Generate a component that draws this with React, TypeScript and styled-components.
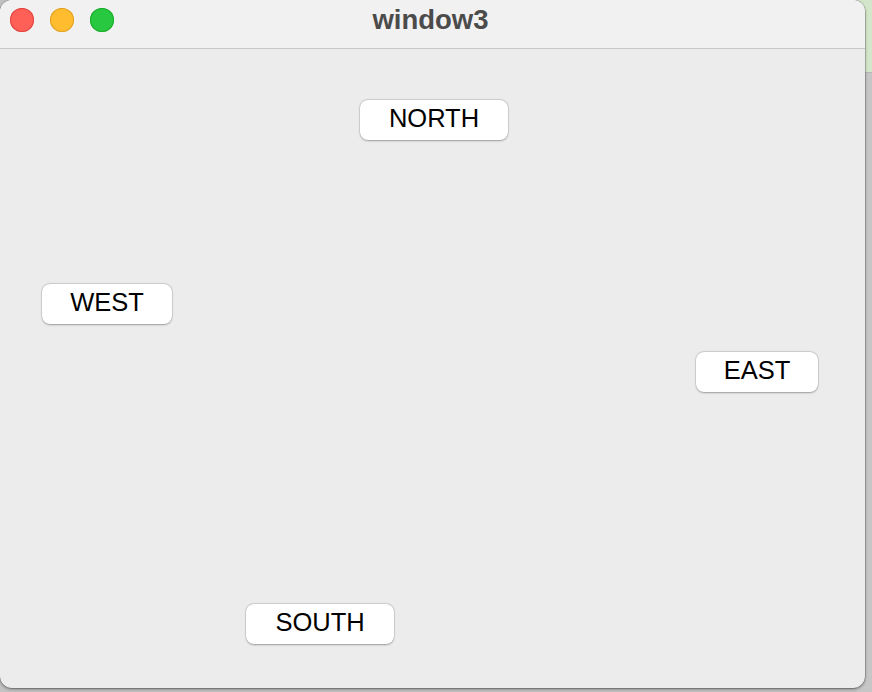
import styled, { createGlobalStyle } from 'styled-components'

const Global = createGlobalStyle`
  html, body {
    margin: 0;
    padding: 0;
    background: #c4c4c4;
    font-family: "Liberation Sans", Arial, sans-serif;
  }
`

const Desktop = styled.div`
  display: flex;
  width: 872px;
  height: 692px;
  overflow: hidden;
  background: #c2c2c2;
`

const Window = styled.div`
  flex: 0 0 865px;
  height: 688px;
  display: flex;
  flex-direction: column;
  border-radius: 12px;
  overflow: hidden;
  background: #ececec;
  box-shadow: 0 1px 3px rgba(0, 0, 0, 0.45), 0 0 0 0.5px rgba(0, 0, 0, 0.25);
  position: relative;
  z-index: 1;
`

const TitleBar = styled.div`
  height: 48px;
  flex: 0 0 48px;
  display: grid;
  grid-template-columns: 1fr auto 1fr;
  align-items: center;
  background: #f2f1f2;
  border-bottom: 1px solid #c9c9c9;
`

const Lights = styled.div`
  display: flex;
  gap: 16px;
  padding-left: 10px;
  margin-top: -8px;
`

const Light = styled.span<{ $fill: string; $edge: string }>`
  width: 24px;
  height: 24px;
  border-radius: 50%;
  background: ${p => p.$fill};
  box-shadow: inset 0 0 0 1px ${p => p.$edge};
`

const Title = styled.div`
  font-size: 27.5px;
  font-weight: bold;
  color: #4b4b4b;
  padding-right: 4px;
  margin-top: -9px;
`

const Canvas = styled.div`
  position: relative;
  flex: 1;
`

const Button = styled.button<{ $x: number; $y: number; $w: number }>`
  position: absolute;
  left: ${p => p.$x}px;
  top: ${p => p.$y}px;
  width: ${p => p.$w}px;
  height: 40px;
  border: none;
  border-radius: 8px;
  background: #ffffff;
  box-shadow: 0 0.5px 2px rgba(0, 0, 0, 0.3), 0 0 0 0.5px rgba(0, 0, 0, 0.12);
  font-family: "Liberation Sans", Arial, sans-serif;
  font-size: 25.5px;
  color: #000;
  padding: 0 0 3px;
  line-height: 37px;
`

const Peek = styled.div`
  flex: 1;
  display: flex;
  flex-direction: column;
  margin-left: -8px;
`

const PeekGreen = styled.div`
  height: 72px;
  background: #d3e6ca;
`

const PeekGray = styled.div`
  flex: 1;
  background: #c6c6c6;
  border-top: 1px solid #b8b8b8;
`

const buttons = [
  { label: 'NORTH', x: 360, y: 51, w: 148 },
  { label: 'WEST', x: 42, y: 235, w: 130 },
  { label: 'EAST', x: 696, y: 303, w: 122 },
  { label: 'SOUTH', x: 246, y: 555, w: 148 },
]

const App: React.FC = () => {
  return (
    <>
      <Global />
      <Desktop>
        <Window>
          <TitleBar>
            <Lights>
              <Light $fill="#fe5f57" $edge="#e0443e" />
              <Light $fill="#febc2e" $edge="#dea123" />
              <Light $fill="#28c840" $edge="#1aab29" />
            </Lights>
            <Title>window3</Title>
            <div />
          </TitleBar>
          <Canvas>
            {buttons.map(b => (
              <Button key={b.label} $x={b.x} $y={b.y} $w={b.w}>{b.label}</Button>
            ))}
          </Canvas>
        </Window>
        <Peek>
          <PeekGreen />
          <PeekGray />
        </Peek>
      </Desktop>
    </>
  )
}

export default App
